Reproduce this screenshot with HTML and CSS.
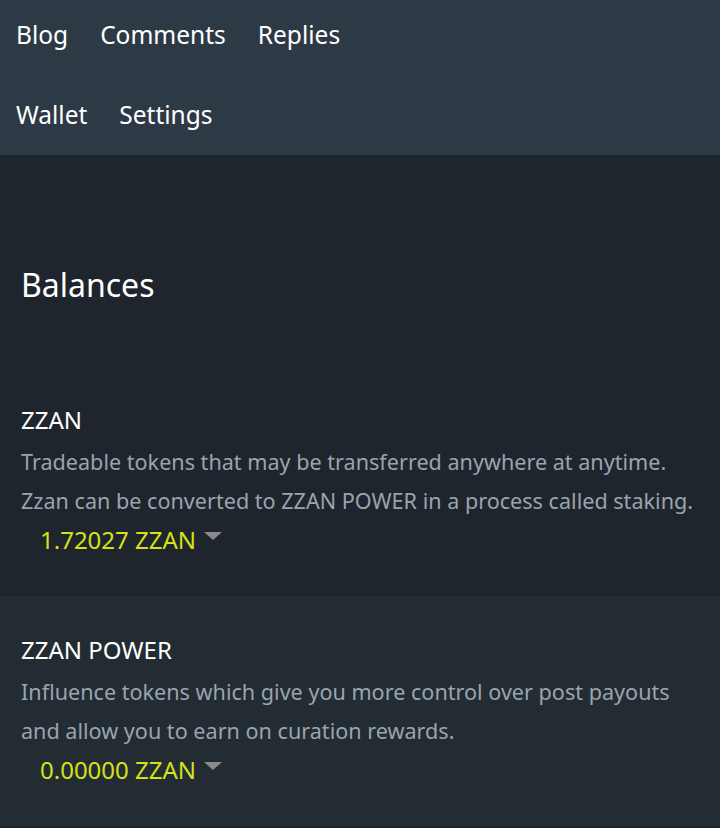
FILE: index.html
```html
<!DOCTYPE html>
<html lang="en">
<head>
  <meta charset="UTF-8">
  <title>Wallet</title>
  <link rel="stylesheet" href="styles.css">
</head>
<body>
<div id="header">
  <ul class="nav">
    <li><a href="#">Blog</a></li>
    <li><a href="#">Comments</a></li>
    <li><a href="#">Replies</a></li>
    <li><a href="#">Wallet</a></li>
    <li><a href="#">Settings</a></li>
  </ul>
</div>
<div id="wallet">
  <div class="balances-head">
    <h2>Balances</h2>
  </div>
  <div class="token">
    <div class="token-title">ZZAN</div>
    <div class="token-desc">Tradeable tokens that may be transferred anywhere at anytime. Zzan can be converted to ZZAN POWER in a process called staking.</div>
    <div class="token-amount">1.72027 ZZAN <span class="caret"></span></div>
  </div>
  <div class="token alt">
    <div class="token-title">ZZAN POWER</div>
    <div class="token-desc">Influence tokens which give you more control over post payouts and allow you to earn on curation rewards.</div>
    <div class="token-amount">0.00000 ZZAN <span class="caret"></span></div>
  </div>
</div>
</body>
</html>
```

FILE: styles.css
```css
body{
  margin: 0;
  padding: 0;
  background-color: #1c2228;
  font-family: "Noto Sans", "Lato", sans-serif;
}
#header{
  background-color: #2d3a46;
  padding-bottom: 5px;
}
.nav{
  margin: 0;
  padding: 0;
  list-style: none;
  display: flex;
  flex-wrap: wrap;
  row-gap: 10px;
  max-width: 380px;
}
.nav li a{
  display: block;
  padding: 20px 16px;
  line-height: 30px;
  font-size: 24.5px;
  color: #fff;
  text-decoration: none;
}
#wallet{
  background-color: #1f252d;
}
.balances-head{
  padding: 110px 21px 61px;
}
.balances-head h2{
  margin: 0;
  font-size: 32px;
  line-height: 40px;
  font-weight: normal;
  color: #fff;
}
.token{
  padding: 40px 10px 40px 21px;
  height: 150px;
}
.token.alt{
  background-color: #232c33;
}
.token-title{
  font-size: 24px;
  line-height: 28px;
  color: #fff;
}
.token-desc{
  margin-top: 8px;
  font-size: 21.6px;
  line-height: 39px;
  color: #9aa4ad;
}
.token-amount{
  margin-top: 5px;
  padding-left: 19px;
  font-size: 24px;
  line-height: 30px;
  color: #d6e118;
}
.caret{
  display: inline-block;
  margin-left: 2px;
  vertical-align: 9px;
  border-top: 8px solid #8a8a8a;
  border-left: 9px solid transparent;
  border-right: 9px solid transparent;
}
```
